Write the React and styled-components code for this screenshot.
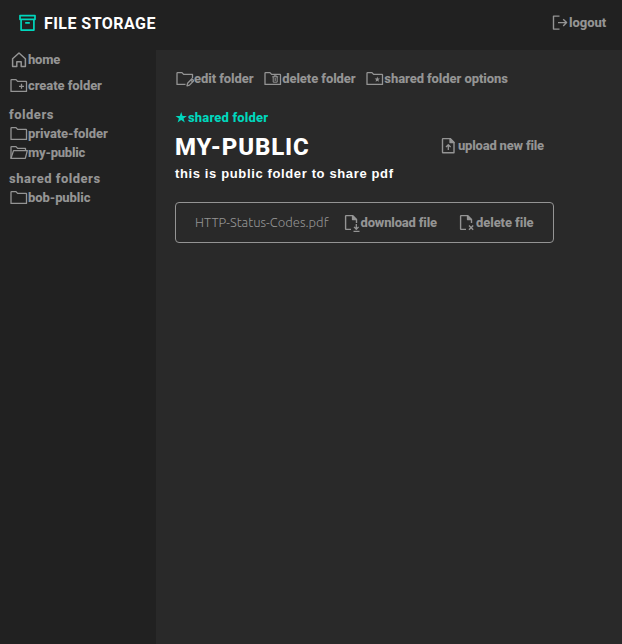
import React from 'react';
import styled, { createGlobalStyle } from 'styled-components';

const GlobalStyle = createGlobalStyle`
  * { box-sizing: border-box; }
  body { margin: 0; background: #292929; color: #949494; font-family: Roboto, sans-serif; }
  h1, h2, h3, p { margin: 0; }
`;

const Page = styled.div`
  display: grid;
  grid-template: 50px 1fr / 156px 1fr;
  height: 100vh;
`;
const Header = styled.header`
  grid-column: 1 / -1;
  display: flex;
  align-items: center;
  justify-content: space-between;
  padding: 0 16px 5px 19px;
  background: #212121;
`;
const Brand = styled.div`
  display: flex;
  align-items: center;
  gap: 8px;
  color: #00d7bd;
`;
const BrandName = styled.h1`
  color: #fff;
  font-size: 16px;
  font-weight: 700;
  line-height: 20px;
  letter-spacing: 0.45px;
  padding-top: 2px;
`;
const Sidebar = styled.nav`
  background: #212121;
  padding-left: 9px;
`;
const SideLink = styled.div`
  display: flex;
  height: ${p => p.$height || 19}px;
`;
const SideTitle = styled.h3`
  font-size: 13px;
  font-weight: 800;
  line-height: 18px;
  letter-spacing: 0.5px;
  margin-top: ${p => p.$top}px;
`;
const Main = styled.main`
  padding: 19px 0 0 19px;
`;
const Toolbar = styled.div`
  display: flex;
  gap: 9.8px;
`;
const Action = styled.a`
  display: inline-flex;
  align-items: center;
  height: 19px;
  white-space: nowrap;
  font-size: 13px;
  font-weight: 800;
  letter-spacing: ${p => (p.$track || 0) - 0.08}px;
  color: ${p => (p.$accent ? '#00d7bd' : 'inherit')};
`;
const Glyph = styled.svg`
  flex: none;
  display: block;
  width: ${p => p.$w || 19}px;
  height: 19px;
  fill: none;
  stroke: currentColor;
  stroke-width: 1.3;
  stroke-linejoin: round;
`;
const Shared = styled.div`
  display: flex;
  margin-top: 20px;
`;
const TitleRow = styled.div`
  display: flex;
  align-items: flex-start;
  width: 370px;
  height: 30px;
  margin-top: 5px;
  padding-top: 1px;
  justify-content: space-between;
`;
const UploadSlot = styled.div`
  display: flex;
  padding: 3px 1px 0 0;
`;
const FolderName = styled.h2`
  color: #fff;
  font-size: 24px;
  font-weight: 800;
  line-height: 28px;
  letter-spacing: 0.85px;
`;
const Description = styled.p`
  color: #fff;
  font: 700 13px/18px "Liberation Sans", sans-serif;
  letter-spacing: 0.63px;
  margin-top: 3px;
`;
const FileCard = styled.div`
  display: flex;
  align-items: center;
  width: 379px;
  height: 41px;
  margin-top: 19px;
  padding-left: 19px;
  border: 1px solid #949494;
  border-radius: 4px;
`;
const FileName = styled.span`
  width: 147.5px;
  padding-bottom: 2px;
  font: 300 13px/18px Ubuntu, "Open Sans", sans-serif;
`;
const FileAction = styled.div`
  display: flex;
  width: ${p => p.$width}px;
`;

const folderPath = 'M2 4.2Q2 3.6 2.6 3.6H7L8.6 5.4H17Q17.5 5.4 17.5 6V15.4H2Z';
const filePath = 'M10.2 2.6H3Q2.5 2.6 2.5 3.2V16.2Q2.5 16.8 3 16.8H14V6.4Z';
const cutFilePath = 'M8 16.4H3.2Q2.6 16.4 2.6 15.8V3.2Q2.6 2.6 3.2 2.6H9.5L13.5 6.6V10';

const icons = {
  home: <path d="M3.6 8.8 10 3l6.4 5.8V16.4h-4.2v-4.6H7.8v4.6H3.6Z" strokeWidth="1.5" />,
  folder: <path d={folderPath} />,
  create: <><path d={folderPath} /><path d="M12.5 7.8v5M10 10.3h5" strokeWidth="1.3" /></>,
  open: <><path d="M2 15.4V4.1Q2 3.6 2.6 3.6H7l1.6 1.8h7.9V7.6" /><path d="M2 15.4 4.5 7.6H18.3L16.3 15.4Z" /></>,
  edit: <><path d="M10.5 15.4H2V4.2Q2 3.6 2.6 3.6H7L8.6 5.4H17.5V9" /><path d="m12 16.8.6-2.6 4.3-4.4 1.9 1.9-4.3 4.4ZM15.7 11l1.9 1.9" /></>,
  trash: <><path d={folderPath} /><path d="M9.2 7.8h6M11 7.8V6.8h2.4v1M10.2 7.8v5.4h4V7.8M12.2 9v3" strokeWidth="1" /></>,
  options: <><path d={folderPath} /><path fill="currentColor" stroke="none" d="m12.3 7.5.7 1.9 2 .1-1.6 1.3.5 2-1.6-1.1-1.7 1.1.5-2-1.5-1.3 2-.1Z" /></>,
  star: <path fill="currentColor" stroke="none" d="m6.2 4 1.4 4h4.3L8.5 10.5l1.3 4.1-3.6-2.5-3.6 2.5L3.9 10.5.5 8h4.3Z" />,
  upload: <><path d={filePath} strokeWidth="1.4" /><path d="M10 2.6V6.5h4Z" fill="currentColor" /><path d="M8.3 14V8.8M6 11l2.3-2.3 2.3 2.3" strokeWidth="1.3" /></>,
  download: <><path d={cutFilePath} strokeWidth="1.4" /><path d="M9.5 2.6v4h4Z" fill="currentColor" /><path d="M13.3 11v5M11 13.9l2.3 2.3 2.3-2.3M10.5 18.3h6" strokeWidth="1.3" /></>,
  remove: <><path d={cutFilePath} strokeWidth="1.4" /><path d="M9.5 2.6v4h4Z" fill="currentColor" /><path d="m11 12.6 4.2 4.2m0-4.2L11 16.8" strokeWidth="1.4" /></>,
  logout: <path d="M8.5 3.1H2.5V16.1H8.5M7 9.6H15.6M12.2 6.2l3.4 3.4-3.4 3.4" strokeWidth="1.4" />,
};

function IconLabel({ icon, children, width, ...rest }) {
  return <Action {...rest}><Glyph $w={width} viewBox={`0 0 ${width || 19} 19`}>{icons[icon]}</Glyph>{children}</Action>;
}

export default function App() {
  return (
    <Page>
      <GlobalStyle />
      <Header>
        <Brand>
          <Glyph $w={17} viewBox="0 0 17 19">
            <path d="M1 2.6H16V6.3H1ZM2.1 6.3V17.1H14.9V6.3M6.2 9.9h4.6" strokeWidth="1.7" />
          </Glyph>
          <BrandName>FILE STORAGE</BrandName>
        </Brand>
        <IconLabel icon="logout" width={18}>logout</IconLabel>
      </Header>
      <Sidebar>
        <SideLink $height={26}><IconLabel icon="home" $track={-0.15}>home</IconLabel></SideLink>
        <SideLink><IconLabel icon="create">create folder</IconLabel></SideLink>
        <SideTitle $top={11}>folders</SideTitle>
        <SideLink><IconLabel icon="folder">private-folder</IconLabel></SideLink>
        <SideLink><IconLabel icon="open" $track={-0.15}>my-public</IconLabel></SideLink>
        <SideTitle $top={8}>shared folders</SideTitle>
        <SideLink><IconLabel icon="folder">bob-public</IconLabel></SideLink>
      </Sidebar>
      <Main>
        <Toolbar>
          <IconLabel icon="edit">edit folder</IconLabel>
          <IconLabel icon="trash">delete folder</IconLabel>
          <IconLabel icon="options">shared folder options</IconLabel>
        </Toolbar>
        <Shared><IconLabel icon="star" width={13} $accent $track={0.25}>shared folder</IconLabel></Shared>
        <TitleRow>
          <FolderName>MY-PUBLIC</FolderName>
          <UploadSlot><IconLabel icon="upload" width={18} $track={-0.1}>upload new file</IconLabel></UploadSlot>
        </TitleRow>
        <Description>this is public folder to share pdf</Description>
        <FileCard>
          <FileName>HTTP-Status-Codes.pdf</FileName>
          <FileAction $width={115.5}><IconLabel icon="download" width={18} $track={-0.08}>download file</IconLabel></FileAction>
          <FileAction><IconLabel icon="remove" width={18}>delete file</IconLabel></FileAction>
        </FileCard>
      </Main>
    </Page>
  );
}
